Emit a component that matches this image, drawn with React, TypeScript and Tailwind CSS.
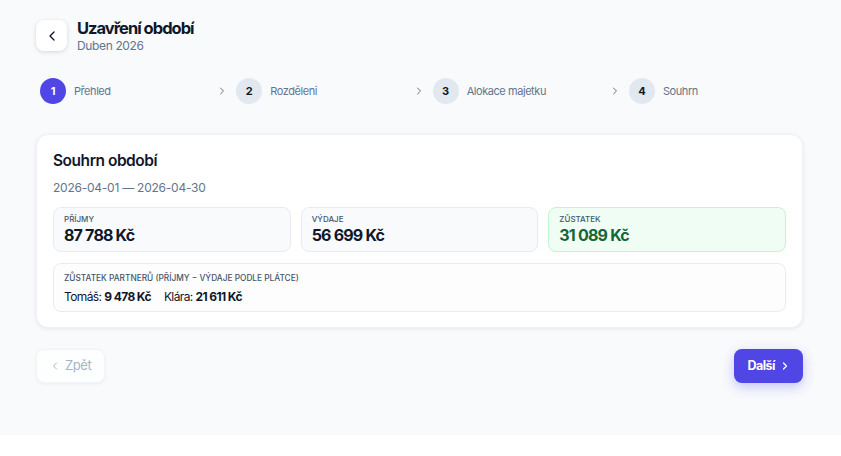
import { ChevronLeft, ChevronRight } from "lucide-react";

const steps = ["Přehled", "Rozděleni", "Alokace majetku", "Souhrn"];

function Stepper() {
    return (
        <div className="flex items-center px-1">
            {steps.map((label, i) => (
                <div key={label} className={i < 3 ? "flex flex-1 items-center" : "flex items-center w-[170px]"}>
                    <div
                        className={
                            i === 0
                                ? "w-[26px] h-[26px] rounded-full bg-[#4f46e5] text-white flex items-center justify-center text-[11px] font-bold"
                                : "w-[26px] h-[26px] rounded-full bg-[#e2e8f0] text-[#0f172a] flex items-center justify-center text-[11px] font-bold"
                        }
                    >
                        {i + 1}
                    </div>
                    <span className="ml-2 text-[11px] text-[#64748b] tracking-[-0.04em]">{label}</span>
                    {i < 3 && (
                        <>
                            <div className="flex-1" />
                            <ChevronRight className="w-3 h-3 text-[#64748b] mr-2" strokeWidth={2} />
                        </>
                    )}
                </div>
            ))}
        </div>
    );
}

function StatBox({ label, value, green }: { label: string; value: string; green?: boolean }) {
    return (
        <div
            className={
                green
                    ? "flex-1 rounded-lg border border-[#bbf7d0] bg-[#f0fdf4] px-[10px] pt-[6px] pb-[6px]"
                    : "flex-1 rounded-lg border border-[#e8ecf2] bg-[#f8fafc] px-[10px] pt-[6px] pb-[6px]"
            }
        >
            <div className="text-[8px] font-medium uppercase text-[#475569] leading-[10px]">{label}</div>
            <div
                className={
                    green
                        ? "mt-px text-[16px] font-bold text-[#166534] tracking-[-0.05em] leading-5"
                        : "mt-px text-[16px] font-bold text-[#0f172a] tracking-[-0.05em] leading-5"
                }
            >
                {value}
            </div>
        </div>
    );
}

export default function App() {
    return (
        <div className="bg-[#f8fafc] min-h-[435px] pl-9 pr-[38px] pt-5 pb-[52px]" style={{ fontFamily: "Inter, 'Noto Sans', sans-serif" }}>
            <div className="flex items-start gap-[10px]">
                <button className="w-[31px] h-[31px] rounded-lg bg-white shadow-[0_1px_4px_rgba(15,23,42,0.15)] flex items-center justify-center">
                    <ChevronLeft className="w-4 h-4 text-[#0f172a]" strokeWidth={2} />
                </button>
                <div className="flex flex-col -mt-[3px]">
                    <h1 className="text-[16.5px] font-bold text-[#0f172a] tracking-[-0.06em] leading-[22px]">Uzavření období</h1>
                    <span className="text-[12px] text-[#64748b] tracking-[-0.03em] leading-[14px]">Duben 2026</span>
                </div>
            </div>

            <div className="mt-[25px]">
                <Stepper />
            </div>

            <div className="mt-[30px] bg-white rounded-xl border border-[#eef1f5] shadow-[0_1px_4px_rgba(15,23,42,0.08)] px-4 pt-4 pb-[15px]">
                <h2 className="text-[15.5px] font-semibold text-[#0f172a] tracking-[-0.03em] leading-5">Souhrn období</h2>
                <div className="mt-[9px] text-[12px] text-[#64748b] tracking-[-0.02em] leading-4">2026-04-01 — 2026-04-30</div>
                <div className="mt-[11px] flex gap-[10px]">
                    <StatBox label="Příjmy" value="87 788 Kč" />
                    <StatBox label="Výdaje" value="56 699 Kč" />
                    <StatBox label="Zůstatek" value="31 089 Kč" green />
                </div>
                <div className="mt-[11px] rounded-lg border border-[#e8ecf2] bg-[#fdfdfe] px-[10px] pt-[9px] pb-1">
                    <div className="text-[8.3px] font-medium uppercase text-[#475569] leading-[10px]">
                        Zůstatek partnerů (příjmy − výdaje podle plátce)
                    </div>
                    <div className="mt-1 text-[12px] text-[#0f172a] tracking-[-0.05em] leading-5 flex gap-[13px]">
                        <span>
                            Tomáš: <b className="font-bold">9 478 Kč</b>
                        </span>
                        <span>
                            Klára: <b className="font-bold">21 611 Kč</b>
                        </span>
                    </div>
                </div>
            </div>

            <div className="mt-[21px] flex justify-between">
                <button className="h-[34px] pl-3 pr-[13px] rounded-lg bg-white border border-[#f1f3f7] shadow-[0_1px_3px_rgba(15,23,42,0.06)] flex items-center gap-1 text-[13px] text-[#94a3b8] tracking-[-0.03em] opacity-80">
                    <ChevronLeft className="w-3 h-3" strokeWidth={2} />
                    Zpět
                </button>
                <button className="h-[34px] pl-[13px] pr-3 rounded-lg bg-[#4f46e5] shadow-[0_4px_12px_rgba(79,70,229,0.3)] flex items-center gap-1 text-[12.5px] font-bold text-white tracking-[-0.04em]">
                    Další
                    <ChevronRight className="w-3 h-3" strokeWidth={2.5} />
                </button>
            </div>
        </div>
    );
}
